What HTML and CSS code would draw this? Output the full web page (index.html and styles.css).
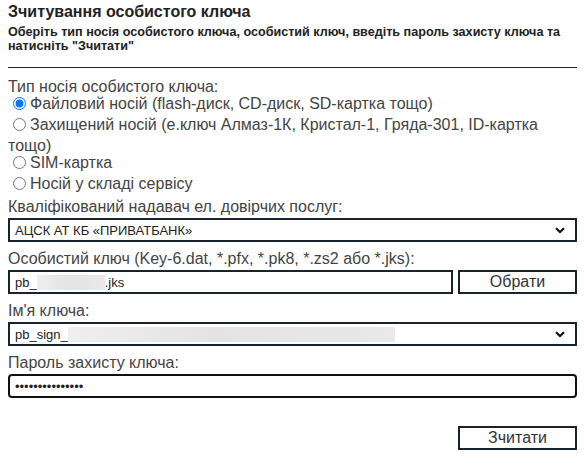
FILE: index.html
```html
<!DOCTYPE html>
<html lang="uk">
<head>
<meta charset="utf-8">
<title>Зчитування особистого ключа</title>
<link rel="stylesheet" href="styles.css">
</head>
<body>
<div class="page">
  <h1 class="title">Зчитування особистого ключа</h1>
  <p class="hint">Оберіть тип носія особистого ключа, особистий ключ, введіть пароль захисту ключа та натисніть "Зчитати"</p>
  <hr class="rule">
  <div class="group">
    <div class="glabel">Тип носія особистого ключа:</div>
    <label class="radio"><input type="radio" name="kt" checked>Файловий носій (flash-диск, CD-диск, SD-картка тощо)</label>
    <label class="radio"><input type="radio" name="kt">Захищений носій (е.ключ Алмаз-1К, Кристал-1, Гряда-301, ID-картка тощо)</label>
    <label class="radio"><input type="radio" name="kt">SIM-картка</label>
    <label class="radio"><input type="radio" name="kt">Носій у складі сервісу</label>
  </div>
  <div class="field first">
    <div class="label">Кваліфікований надавач ел. довірчих послуг:</div>
    <div class="box select"><span class="val">АЦСК АТ КБ «ПРИВАТБАНК»</span><svg class="chev" width="10" height="7" viewBox="0 0 10 7"><path d="M1 1.2 L5 5 L9 1.2" fill="none" stroke="#111" stroke-width="2"/></svg></div>
  </div>
  <div class="field">
    <div class="label">Особистий ключ (Key-6.dat, *.pfx, *.pk8, *.zs2 або *.jks):</div>
    <div class="filerow">
      <div class="box file"><span class="val">pb_</span><span class="blur b1"></span><span class="val tail">.jks</span></div>
      <div class="box btn">Обрати</div>
    </div>
  </div>
  <div class="field">
    <div class="label">Ім'я ключа:</div>
    <div class="box select"><span class="val">pb_sign_</span><span class="blur b2"></span><svg class="chev" width="10" height="7" viewBox="0 0 10 7"><path d="M1 1.2 L5 5 L9 1.2" fill="none" stroke="#111" stroke-width="2"/></svg></div>
  </div>
  <div class="field">
    <div class="label">Пароль захисту ключа:</div>
    <div class="box pass"><span class="val dots">•••••••••••••••</span></div>
  </div>
  <div class="actions">
    <div class="box btn read">Зчитати</div>
  </div>
</div>
</body>
</html>
```

FILE: styles.css
```css
html, body { margin: 0; padding: 0; background: #fff; }
body { font-family: Arial, "Liberation Sans", sans-serif; color: #333; }
.page { padding: 3px 8px 0 8px; width: 569px; }
.title { font-size: 16px; font-weight: bold; margin: 0; line-height: 18px; color: #222; }
.hint { font-size: 12.6px; font-weight: bold; margin: 4px 0 0 0; line-height: 14px; color: #222; }
.rule { border: 0; border-top: 1px solid #222; margin: 14px 0 0 0; height: 0; }
.group { margin-top: 11px; }
.glabel { font-size: 16px; line-height: 16px; color: #444; }
.radio { display: block; font-size: 16px; line-height: 17px; color: #444; }
.radio input { margin: 2px 4px 6px 5px; width: 13px; height: 13px; vertical-align: top; }
.field { margin-top: 8px; }
.field.first { margin-top: 2px; }
.label { font-size: 16px; line-height: 18px; color: #444; margin-bottom: 2px; }
.box { border: 2px solid #18232e; box-sizing: border-box; height: 24px; display: flex; align-items: center; font-size: 13px; color: #222; }
.val { padding-left: 5px; }
.tail { padding-left: 0; }
.select { padding-right: 10px; }
.select .chev { margin-left: auto; }
.filerow { display: flex; gap: 5px; }
.file { flex: 1; }
.blur { display: inline-block; height: 15px; background: linear-gradient(90deg, #efefef, #e3e3e3 45%, #e9e9e9); }
.b1 { width: 68px; }
.b2 { width: 327px; }
.btn { justify-content: center; font-size: 16px; color: #333; width: 119px; flex: 0 0 119px; }
.pass { border-radius: 4px; border-color: #111; }
.dots { font-size: 13px; color: #222; }
.actions { display: flex; justify-content: flex-end; margin-top: 28px; }
.read { width: 119px; }
```
